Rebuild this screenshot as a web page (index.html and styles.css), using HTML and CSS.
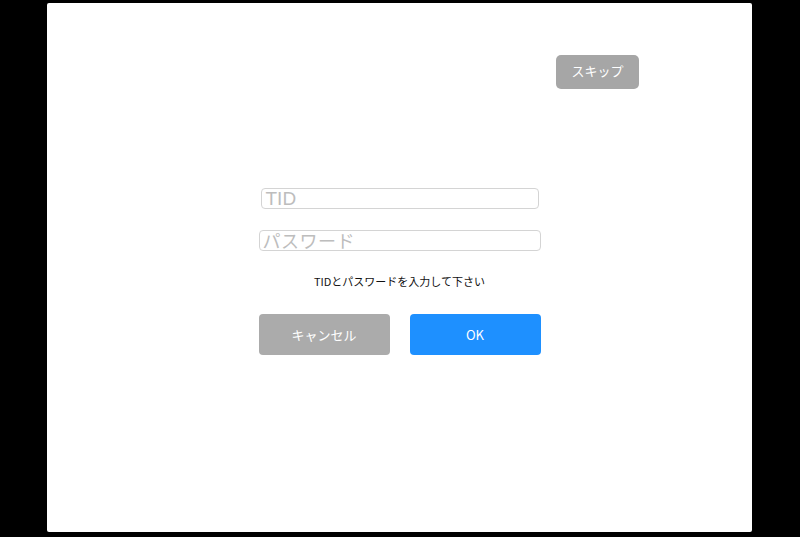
FILE: index.html
```html
<!DOCTYPE html>
<html lang="ja">
<head>
<meta charset="utf-8">
<link rel="stylesheet" href="styles.css">
</head>
<body>
<div class="panel">
  <div class="top">
    <button class="skip">スキップ</button>
  </div>
  <div class="form">
    <div class="field tid"><span class="ph">TID</span></div>
    <div class="field pw"><span class="ph">パスワード</span></div>
    <p class="msg">TIDとパスワードを入力して下さい</p>
    <div class="actions">
      <button class="btn cancel">キャンセル</button>
      <button class="btn ok">OK</button>
    </div>
  </div>
</div>
</body>
</html>
```
FILE: styles.css
```css
html, body {
  margin: 0;
  padding: 0;
  background: #000;
  height: 537px;
  overflow: hidden;
  font-family: "Noto Sans CJK JP", "Noto Sans", sans-serif;
}
.panel {
  box-sizing: border-box;
  margin: 3px 48px 0 47px;
  width: 705px;
  height: 529px;
  background: #fff;
  border-radius: 2px;
  display: flex;
  flex-direction: column;
}
.top {
  display: flex;
  justify-content: flex-end;
  padding: 52px 113px 0 0;
}
.skip {
  width: 83px;
  height: 34px;
  border: none;
  border-radius: 5px;
  background: #a6a6a6;
  color: #fff;
  font-family: inherit;
  font-size: 13px;
  line-height: 16px;
  padding: 0 0 3px;
}
.form {
  display: flex;
  flex-direction: column;
  align-items: center;
  margin-top: 99px;
}
.field {
  box-sizing: border-box;
  height: 21px;
  border: 1px solid #d4d4d4;
  border-radius: 4px;
  display: flex;
  align-items: center;
}
.field.tid {
  width: 278px;
  padding-left: 4px;
}
.field.pw {
  width: 282px;
  margin-top: 21px;
  padding-left: 3px;
}
.ph {
  color: #bdbdbd;
  font-size: 19px;
  line-height: 19px;
}
.pw .ph {
  font-size: 18px;
  letter-spacing: 0.5px;
}
.tid .ph {
  font-family: "Liberation Sans", "Noto Sans CJK JP", sans-serif;
}
.msg {
  margin: 22px 0 0;
  font-size: 11px;
  line-height: 16px;
  color: #111;
}
.actions {
  display: flex;
  gap: 20px;
  margin-top: 25px;
}
.btn {
  width: 131px;
  height: 41px;
  border: none;
  border-radius: 4px;
  color: #fff;
  font-family: inherit;
  font-size: 13px;
  line-height: 16px;
  padding: 0;
}
.cancel {
  background: #ababab;
}
.ok {
  background: #1e90ff;
}
```
